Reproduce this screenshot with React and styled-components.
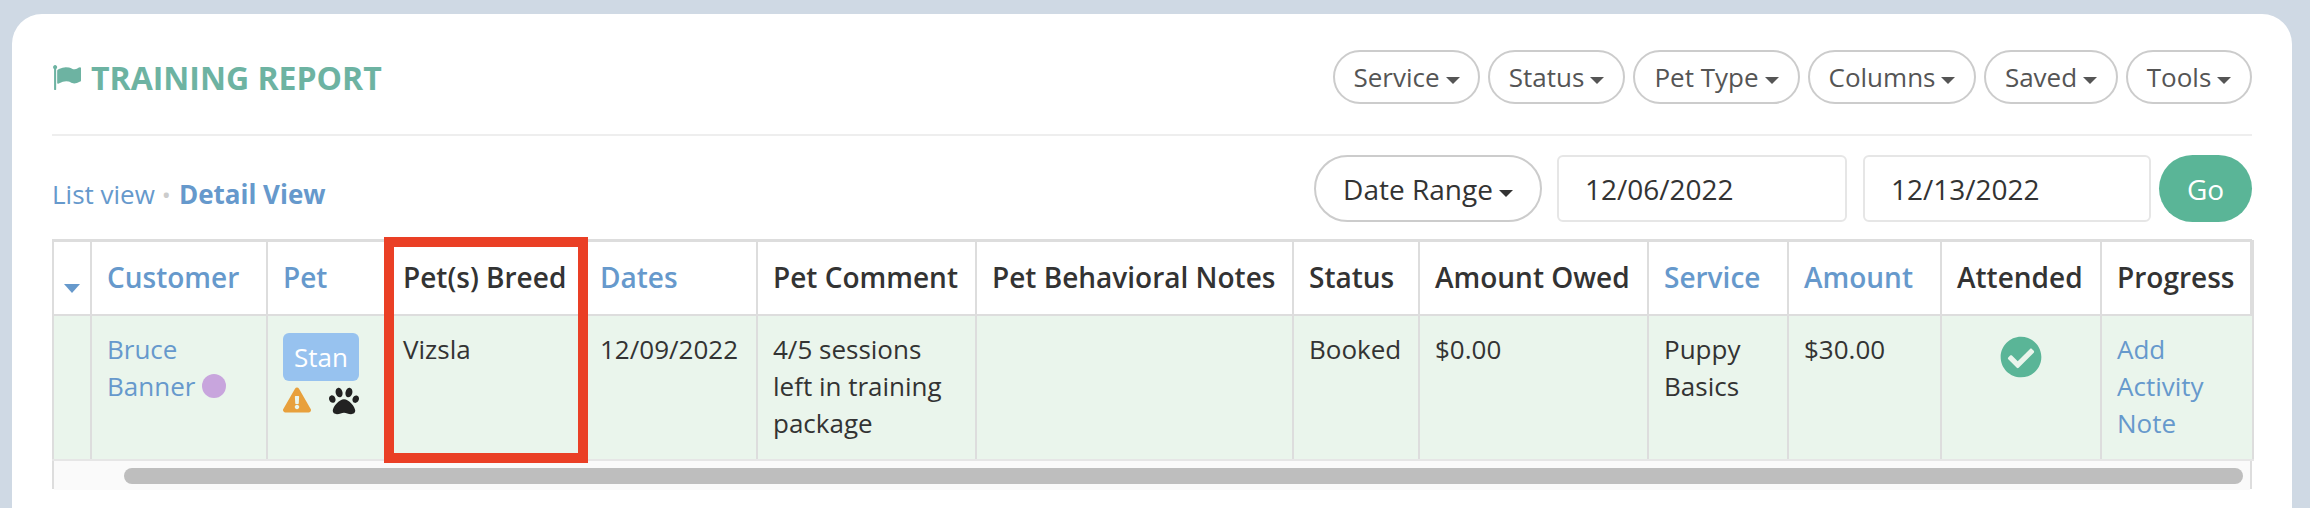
import React from 'react';
import styled, { createGlobalStyle } from 'styled-components';
import { FaCheckCircle, FaExclamationTriangle, FaPaw } from 'react-icons/fa';

const Global = createGlobalStyle`
  html, body { margin: 0; padding: 0; height: 508px; overflow: hidden; background: #cfd9e4; }
  * { box-sizing: border-box; }
  body { font-family: "Open Sans", "Liberation Sans", sans-serif; color: #333; }
`;

const Card = styled.div`
  margin: 14px 18px 0 12px;
  height: 600px;
  padding: 36px 40px 0;
  background: #fff;
  border-radius: 30px 30px 0 0;
`;

const TopBar = styled.div`
  display: flex;
  justify-content: space-between;
  align-items: flex-start;
  height: 86px;
  border-bottom: 2px solid #eee;
`;

const Title = styled.h1`
  display: flex;
  align-items: center;
  gap: 10px;
  margin: 0;
  height: 54px;
  font-size: 32px;
  font-weight: 700;
  color: #6db3a2;
  svg { width: 29px; height: 29px; fill: #6db3a2; }
`;

const Filters = styled.div`
  display: flex;
  gap: 8px;
`;

const Caret = styled.span`
  display: inline-block;
  margin-left: 6px;
  vertical-align: 3px;
  border-style: solid;
  border-width: ${p => (p.$big ? '9px 8px 0' : '7px 7px 0')};
  border-color: ${p => p.$color || '#555'} transparent transparent;
`;

const Pill = styled.button`
  height: 54px;
  width: ${p => p.$w}px;
  padding: 0;
  border: 2px solid #ccc;
  border-radius: 27px;
  background: #fff;
  font: 400 26px "Open Sans", sans-serif;
  color: #555;
  white-space: nowrap;
`;

const ControlBar = styled.div`
  display: flex;
  justify-content: space-between;
  align-items: flex-end;
  height: 86px;
  padding-top: 19px;
  margin-bottom: 17px;
`;

const ViewLinks = styled.div`
  font-size: 26px;
  line-height: 36px;
  padding-bottom: 9px;
  color: #6699cc;
  b { font-weight: 700; }
  span { color: #ccc; margin: 0 8px 0 7px; font-size: 24px; }
`;

const DateControls = styled.div`
  display: flex;
  align-items: stretch;
  height: 67px;
`;

const RangeButton = styled.button`
  width: 228px;
  margin-right: 15px;
  padding: 0;
  border: 2px solid #ccc;
  border-radius: 34px;
  background: #fff;
  font: 400 28px "Open Sans", sans-serif;
  color: #333;
  white-space: nowrap;
`;

const DateInput = styled.input`
  width: ${p => p.$w}px;
  margin-right: ${p => p.$gap}px;
  padding: 0 26px;
  border: 2px solid #e6e6e6;
  border-radius: 6px;
  font: 400 28px "Open Sans", sans-serif;
  color: #333;
  outline: none;
`;

const GoButton = styled.button`
  width: 93px;
  padding: 0;
  border: 0;
  border-radius: 34px;
  background: #5ab597;
  color: #fff;
  font: 400 28px "Open Sans", sans-serif;
`;

const TableWrap = styled.div`
  position: relative;
  width: 2200px;
  height: 250px;
  border: 2px solid #ddd;
`;

const Table = styled.table`
  width: 2200px;
  margin-left: -2px;
  margin-top: -1px;
  border-collapse: collapse;
  table-layout: fixed;
  font-size: 26px;
  line-height: 37px;
`;

const Th = styled.th`
  height: 74px;
  padding: 0 0 2px 15px;
  border: 2px solid #ddd;
  text-align: left;
  font-size: 28px;
  font-weight: 600;
  white-space: nowrap;
  color: ${p => (p.$link ? '#6699cc' : '#333')};
`;

const SortTh = styled(Th)`
  padding: 14px 0 0 4px;
`;

const Td = styled.td`
  height: 145px;
  padding: 15px 15px 0;
  border: 2px solid #ddd;
  border-bottom-color: #e6e6e6;
  vertical-align: top;
  background: #eaf5ec;
  color: ${p => (p.$link ? '#6699cc' : '#333')};
  text-align: ${p => (p.$center ? 'center' : 'left')};
`;

const Dot = styled.span`
  display: inline-block;
  width: 24px;
  height: 24px;
  margin-left: 7px;
  vertical-align: -2px;
  border-radius: 50%;
  background: #c8a5dd;
`;

const PetBadge = styled.div`
  width: 76px;
  height: 48px;
  border-radius: 6px;
  background: #97c2ef;
  color: #fff;
  text-align: center;
  line-height: 49px;
`;

const PetIcons = styled.div`
  display: flex;
  justify-content: space-between;
  width: 76px;
  margin-top: 5px;
`;

const PetCell = styled(Td)`
  padding-top: 17px;
`;

const CheckIcon = styled(FaCheckCircle)`
  display: block;
  width: 42px;
  height: 42px;
  margin: 5px auto 0;
  color: #5ab597;
`;

const Track = styled.div`
  height: 29px;
  padding: 7px 7px 0 70px;
  background: #fafafa;
`;

const Thumb = styled.div`
  height: 16px;
  border-radius: 8px;
  background: #bebebe;
`;

const Highlight = styled.div`
  position: absolute;
  left: 330px;
  top: -4px;
  width: 204px;
  height: 226px;
  border: 10px solid #ea3f25;
  pointer-events: none;
`;

const widths = [38, 176, 120, 197, 173, 219, 317, 126, 229, 140, 153, 160, 152];

const heads = [
  { label: 'Customer', link: true },
  { label: 'Pet', link: true },
  { label: 'Pet(s) Breed' },
  { label: 'Dates', link: true },
  { label: 'Pet Comment' },
  { label: 'Pet Behavioral Notes' },
  { label: 'Status' },
  { label: 'Amount Owed' },
  { label: 'Service', link: true },
  { label: 'Amount', link: true },
  { label: 'Attended' },
  { label: 'Progress' },
];

const filters = [
  ['Service', 147], ['Status', 137], ['Pet Type', 167],
  ['Columns', 168], ['Saved', 134], ['Tools', 126],
];

const FlagIcon = () => (
  <svg viewBox="0 0 1792 1792">
    <path d="M320 256q0 72-64 109v1267q0 13-9.500 22.500t-22.500 9.500h-64q-13 0-22.500-9.500t-9.500-22.500v-1267q-64-37-64-109 0-52 38-90t90-38 90 38 38 90zm1472 64v763q0 25-12.500 38.500t-39.500 27.500q-215 116-369 116-61 0-123.500-22t-108.500-48-115.500-48-142.500-22q-192 0-464 146-17 9-33 9-26 0-45-19t-19-45v-742q0-32 31-55 21-14 79-43 236-120 421-120 107 0 200 29t219 88q38 19 88 19 54 0 117.500-21t110-47 88-47 54.500-21q26 0 45 19t19 45z" />
  </svg>
);

const App = () => (
  <>
    <Global />
    <Card>
      <TopBar>
        <Title><FlagIcon />TRAINING REPORT</Title>
        <Filters>
          {filters.map(([label, w]) => (
            <Pill key={label} $w={w}>{label}<Caret /></Pill>
          ))}
        </Filters>
      </TopBar>

      <ControlBar>
        <ViewLinks>List view<span>•</span><b>Detail View</b></ViewLinks>
        <DateControls>
          <RangeButton>Date Range<Caret $color="#333" /></RangeButton>
          <DateInput $w={290} $gap={16} readOnly value="12/06/2022" />
          <DateInput $w={288} $gap={8} readOnly value="12/13/2022" />
          <GoButton>Go</GoButton>
        </DateControls>
      </ControlBar>

      <TableWrap>
        <Table>
          <colgroup>
            {widths.map((w, i) => <col key={i} style={{ width: w }} />)}
          </colgroup>
          <thead>
            <tr>
              <SortTh><Caret $big $color="#6699cc" /></SortTh>
              {heads.map(h => <Th key={h.label} $link={h.link}>{h.label}</Th>)}
            </tr>
          </thead>
          <tbody>
            <tr>
              <Td />
              <Td $link>Bruce Banner<Dot /></Td>
              <PetCell>
                <PetBadge>Stan</PetBadge>
                <PetIcons>
                  <FaExclamationTriangle size={28} color="#e8a03c" />
                  <FaPaw size={30} color="#222" />
                </PetIcons>
              </PetCell>
              <Td>Vizsla</Td>
              <Td>12/09/2022</Td>
              <Td>4/5 sessions left in training package</Td>
              <Td />
              <Td>Booked</Td>
              <Td>$0.00</Td>
              <Td>Puppy Basics</Td>
              <Td>$30.00</Td>
              <Td $center><CheckIcon /></Td>
              <Td $link>Add Activity Note</Td>
            </tr>
          </tbody>
        </Table>
        <Track><Thumb /></Track>
        <Highlight />
      </TableWrap>
    </Card>
  </>
);

export default App;
